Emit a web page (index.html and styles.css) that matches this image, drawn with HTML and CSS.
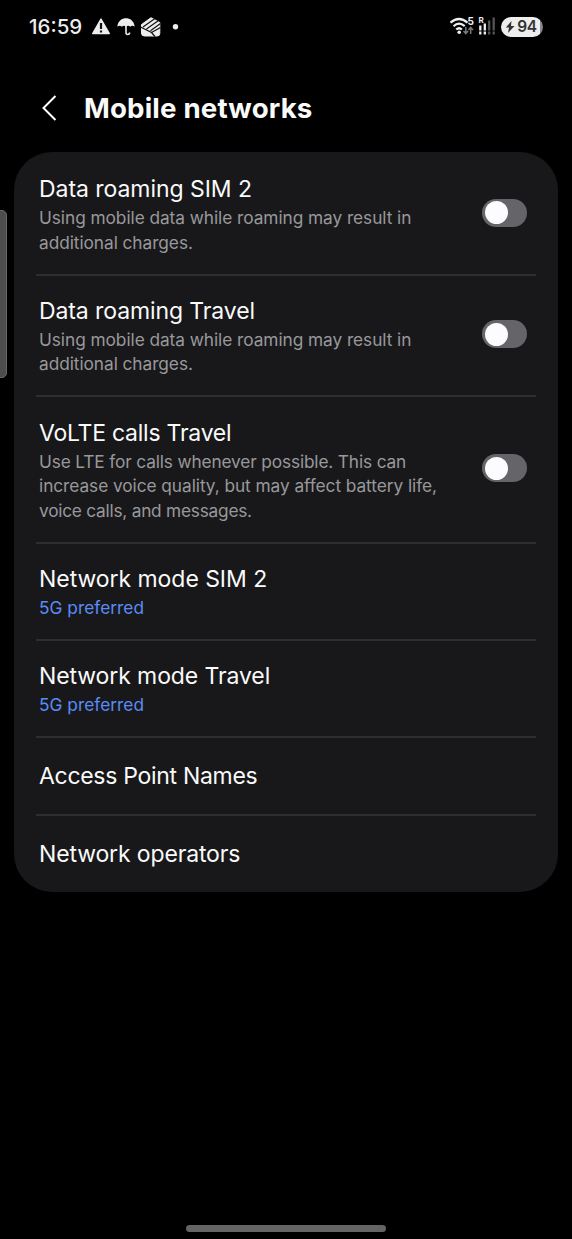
FILE: index.html
```
<!DOCTYPE html>
<html lang="en">
<head>
<meta charset="utf-8">
<title>Mobile networks</title>
<link rel="stylesheet" href="styles.css">
</head>
<body>
<div class="screen">
  <header class="status">
    <div class="status-left">
      <span class="clock">16:59</span>
      <svg class="left-icons" width="96" height="24" viewBox="0 0 96 24">
        <path d="M10 4 18.300 18.500H1.700Z" fill="#eee" stroke="#eee" stroke-width="1.400" stroke-linejoin="round"/>
        <path d="M10 8v6M10 15.400v2" stroke="#111" stroke-width="2.200"/>
        <path d="M26.300 11.700C27 5.800 31 3.300 35 3.300s8 2.500 8.700 8.400c-1.200-1.300-3.400-1.300-4.500 0-1.200-1.200-3-1.200-4.200 0-1.200-1.200-3-1.200-4.200 0-1.100-1.300-3.300-1.300-4.500 0Z" fill="#eee"/>
        <path d="M35 11v6.500q0 2 1.800 2 1.800 0 1.800-1.900" fill="none" stroke="#eee" stroke-width="1.600"/>
        <path d="M50.500 9.500 60 2.700 68.800 7.500V18.500Q68.800 21 66 21H53.500Q50.500 21 50.500 18Z" fill="#eee" stroke="#eee" stroke-width="1" stroke-linejoin="round"/>
        <path d="M52 12 64 3.500M55.500 14 67.500 5.500M59.500 15.800 69.500 8.500M49.500 12 60.500 17.500 64 21.500M60.500 17.500 69.500 12.500" fill="none" stroke="#111" stroke-width="1.200"/>
        <circle cx="84.500" cy="11.700" r="2.700" fill="#eee"/>
      </svg>
    </div>
    <div class="status-right">
      <svg class="right-icons" width="48" height="24" viewBox="0 0 48 24">
        <g fill="none" stroke="#eee" stroke-width="2.200">
          <path d="M1.500 7.700Q10 .3 18.500 7.700"/>
          <path d="M4.500 11.200Q10 6.200 15.700 11.200"/>
          <path d="M7.200 14.500Q10 12 13 14.500"/>
        </g>
        <circle cx="10.200" cy="17.200" r="1.800" fill="#eee"/>
        <text class="tiny" x="18.500" y="10">5</text>
        <g fill="none" stroke="#777" stroke-width="1.500"><path d="M16.800 12v6.500M14.500 16l2.300 2.600 2.300-2.600M21.700 19v-6.500M19.400 15l2.300-2.600 2.300 2.600"/></g>
        <text class="tiny roam" x="29.500" y="8">R</text>
        <path d="M31.300 10.500V19.500M35.800 8.500V19.500" stroke="#eee" stroke-width="2.300"/>
        <path d="M40.200 5.500V19.500M44.700 2.500V19.500" stroke="#555" stroke-width="2.300"/>
        <path d="M29 16h18" stroke="#000" stroke-width="1"/>
      </svg>
      <div class="battery">
        <svg width="10" height="14" viewBox="0 0 10 14"><path d="M6.500 1 .8 7.500H4L3 13 9.500 6H6Z" fill="#333"/></svg>
        <span>94</span>
      </div>
    </div>
  </header>
  <div class="heading">
    <svg class="back" width="18" height="28" viewBox="0 0 18 28"><path d="M14.500 2 2.500 14l12 12" fill="none" stroke="#fff" stroke-width="2"/></svg>
    <h1>Mobile networks</h1>
  </div>
  <main class="card">
    <section class="row">
      <div><h2 class="roaming-sim">Data roaming SIM 2</h2><p>Using mobile data while roaming may result in<br>additional charges.</p></div>
      <i class="switch"></i>
    </section>
    <section class="row">
      <div><h2 class="roaming-travel">Data roaming Travel</h2><p>Using mobile data while roaming may result in<br>additional charges.</p></div>
      <i class="switch"></i>
    </section>
    <section class="row">
      <div><h2 class="volte">VoLTE calls Travel</h2><p><span class="tight">Use LTE for calls whenever possible. This can</span><br>increase voice quality, but may affect battery life,<br><span class="tighter">voice calls, and messages.</span></p></div>
      <i class="switch"></i>
    </section>
    <section class="row">
      <div><h2 class="mode-sim">Network mode SIM 2</h2><p class="link">5G preferred</p></div>
    </section>
    <section class="row">
      <div><h2 class="mode-travel">Network mode Travel</h2><p class="link">5G preferred</p></div>
    </section>
    <section class="row single"><h2 class="access">Access Point Names</h2></section>
    <section class="row single"><h2 class="operators">Network operators</h2></section>
  </main>
  <div class="edge-handle"></div>
  <div class="nav-pill"></div>
</div>
</body>
</html>
```
FILE: styles.css
```
* { box-sizing: border-box; }
body { margin: 0; background: #000; color: #fafafa; font-family: Inter, "Liberation Sans", sans-serif; }
.screen { position: relative; height: 1239px; display: flex; flex-direction: column; overflow: hidden; }
.status { height: 54px; padding: 0 29px; display: flex; justify-content: space-between; align-items: center; }
.status-left, .status-right { display: flex; align-items: center; }
.clock { width: 62px; margin-top: -1px; font-size: 20.500px; font-weight: 500; color: #eee; white-space: nowrap; }
.left-icons, .right-icons { display: block; }
.right-icons { margin-right: 4px; }
.tiny { font-size: 10px; font-weight: 700; fill: #eee; }
.roam { font-size: 8px; }
.battery { width: 42px; height: 20px; margin-top: -1px; border-radius: 10px; background: linear-gradient(90deg, #eee 94%, #888 94%); color: #333; display: flex; align-items: center; justify-content: center; gap: 2px; padding-right: 2px; font-size: 15.500px; font-weight: 600; letter-spacing: -0.400px; }
.heading { height: 98px; padding: 9px 0 0 41px; display: flex; align-items: center; }
.back { flex: none; margin-right: 25px; }
h1 { margin: 0; font-size: 27.700px; font-weight: 700; line-height: 36px; letter-spacing: 0.160px; white-space: nowrap; }
.card { height: 739.500px; margin: 0 14px; padding: 2px 22px 0; background: #18181a; border-radius: 38px; }
.row { display: flex; justify-content: space-between; align-items: center; padding: 19.400px 9px 18.650px 3px; border-bottom: 2px solid #2e2e30; }
.row:last-child { border-bottom: 0; }
h2 { margin: 0; font-size: 23px; font-weight: 400; line-height: 33px; white-space: nowrap; }
p { margin: 0; font-size: 17.300px; line-height: 24.350px; letter-spacing: -0.060px; color: #98989a; white-space: nowrap; }
.roaming-sim, .mode-sim { letter-spacing: -0.050px; }
.roaming-travel, .mode-travel { letter-spacing: -0.100px; }
.volte { letter-spacing: -0.240px; }
.access { letter-spacing: -0.300px; }
.operators { letter-spacing: -0.140px; }
.tight { letter-spacing: -0.150px; }
.tighter { letter-spacing: -0.240px; }
.link { color: #5a8cf5; letter-spacing: 0.020px; }
.row.single { padding: 22px 3px 20.700px; }
.switch { flex: none; width: 45px; height: 28px; border-radius: 14px; background: #656569; padding: 2.500px 3px; margin-top: -3px; }
.switch::before { content: ""; display: block; width: 23px; height: 23px; border-radius: 50%; background: #fcfcff; }
.edge-handle { position: absolute; left: -6px; top: 210px; width: 13px; height: 168px; border-radius: 5px; background: #4d4d4d; border: 1px solid #686868; }
.nav-pill { position: absolute; left: 186px; top: 1225px; width: 200px; height: 7px; border-radius: 4px; background: #646464; }
```
